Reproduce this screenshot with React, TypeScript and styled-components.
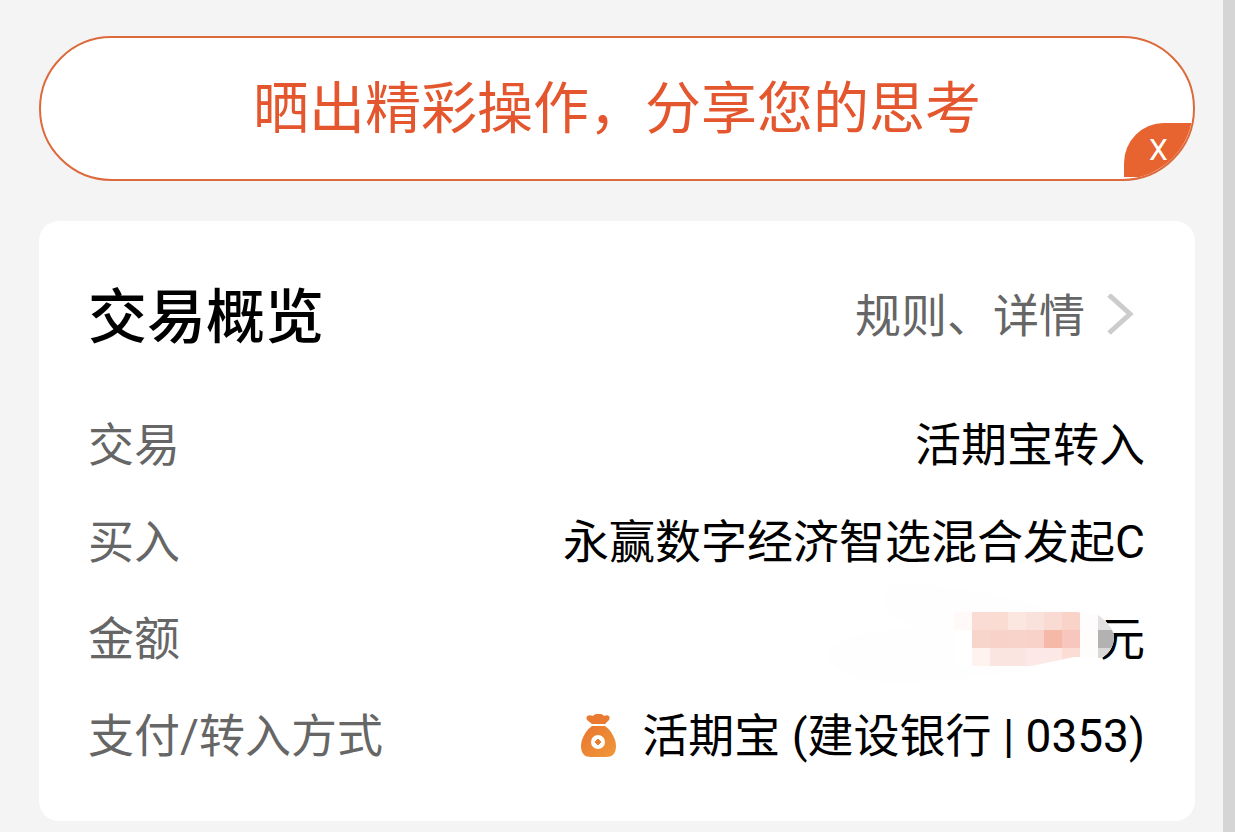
import React from 'react';
import styled, { createGlobalStyle } from 'styled-components';

const GlobalStyle = createGlobalStyle`
  * { box-sizing: border-box; }
  body {
    margin: 0;
    background: #f4f4f4;
    font-family: Roboto, "Noto Sans CJK SC", sans-serif;
  }
`;

const Page = styled.main`
  min-height: 100vh;
  padding: 36px 28px 11px 39px;
  border-right: 12px solid #d5d5d5;
  display: flex;
  flex-direction: column;
  gap: 40px;
`;

const Banner = styled.div`
  position: relative;
  overflow: hidden;
  display: flex;
  justify-content: center;
  align-items: center;
  height: 145px;
  border: 2px solid #dc6a3c;
  border-radius: 73px;
  background: #fff;
`;

const BannerLink = styled.a`
  color: #e4572e;
  font-size: 56px;
  line-height: 80px;
  text-decoration: none;
  white-space: nowrap;
`;

const CloseButton = styled.button`
  position: absolute;
  right: 0;
  bottom: 2px;
  width: 69px;
  height: 54px;
  padding: 0;
  border: 0;
  border-radius: 40px 0 0 0;
  background: #e76430;
  color: #fff;
  font: 400 30px/54px Roboto, sans-serif;
`;

const Card = styled.section`
  padding: 50px 50px 36px 49px;
  border-radius: 20px;
  background: #fff;
`;

const CardHeader = styled.header`
  display: flex;
  justify-content: space-between;
  align-items: center;
  height: 90px;
  margin-bottom: 36px;
`;

const Title = styled.h2`
  margin: 0;
  padding-top: 4px;
  font-size: 59px;
  line-height: 86px;
  font-weight: 500;
  color: #000;
`;

const DetailLink = styled.a`
  display: flex;
  align-items: center;
  gap: 20px;
  padding-right: 10px;
  color: #666;
  font-size: 46px;
  line-height: 66px;
  text-decoration: none;
`;

const Rows = styled.dl`
  margin: 0;
`;

const Row = styled.div`
  display: flex;
  justify-content: space-between;
  align-items: center;
  height: 97px;
  font-size: 46px;
  line-height: 67px;
  white-space: nowrap;
`;

const Label = styled.dt`
  color: #666;
`;

const Value = styled.dd`
  position: relative;
  display: flex;
  align-items: center;
  margin: 0;
  color: #000;
`;

const BagIcon = styled.svg`
  width: 38px;
  height: 46px;
  margin-right: 25px;
`;

const Mask = styled.svg`
  position: absolute;
  right: -15px;
  top: -29px;
  width: 340px;
  height: 118px;
`;

const mosaic = [
  ['#fffaf7', '#fadcd4', '#fbdcd3', '#fce7e0', '#f9e1dc', '#f9dbd4', '#f9d2c8', '#fefcfc', '#e1e1e1'],
  ['#ffffff', '#f8d5cb', '#f8d2c9', '#f8d3c9', '#f8d2c9', '#f6b8a7', '#f7c7bd', '#fffdfb', '#b2b2b2'],
  ['#ffffff', '#fef3ef', '#fbe5e0', '#fbe5e0', '#fce9e7', '#fce8e5', '#fbddd6', '#fdfdfc', '#d9d9d9'],
];

function AmountMask() {
  return (
    <Mask viewBox="820 577 340 118" aria-hidden="true">
      <defs>
        <clipPath id="stroke">
          <path d="M954 612H1076L1098 615C1107 621 1114 630 1114 637C1114 646 1109 653 1102 658L1080 657L1074 657L1031 666H954Z" />
        </clipPath>
      </defs>
      <path fill="#fefefe" d="M900 582C960 586 1010 598 1060 610L1098 615C1107 621 1114 630 1114 637C1114 646 1109 653 1102 658L1076 657C1010 675 940 684 880 682C835 677 825 660 830 648C845 632 880 632 915 626C875 616 874 586 900 582Z" />
      <g clipPath="url(#stroke)" shapeRendering="crispEdges">
        {mosaic.map((line, y) =>
          line.map((fill, x) => (
            <rect key={`${x}-${y}`} x={954 + x * 18} y={612 + y * 18} width="18" height="18" fill={fill} />
          )),
        )}
      </g>
    </Mask>
  );
}

function MoneyBag() {
  return (
    <BagIcon viewBox="0 1 38 46" aria-hidden="true">
      <defs>
        <linearGradient id="bag" x1="0" y1="0" x2="1" y2="1">
          <stop offset="0" stopColor="#e9752f" />
          <stop offset="1" stopColor="#f0983a" />
        </linearGradient>
      </defs>
      <path fill="#ea7a32" d="M13 11L8 7C6 3 10 1 14 3C16 0 23 0 25 3C29 1 32 3 30 7L26 11Z" />
      <path fill="url(#bag)" d="M13 13H26C32 17 37 26 37 33C37 41 33 44 27 44H12C6 44 2 41 2 33C2 26 7 17 13 13Z" />
      <circle cx="19" cy="29" r="7" fill="#fff" />
      <path fill="#ea7c30" d="M19 26L22 29L19 32L16 29Z" stroke="#ea7c30" strokeLinejoin="round" />
    </BagIcon>
  );
}

export default function App() {
  return (
    <>
      <GlobalStyle />
      <Page>
        <Banner>
          <BannerLink href="#share">晒出精彩操作，分享您的思考</BannerLink>
          <CloseButton type="button">X</CloseButton>
        </Banner>
        <Card>
          <CardHeader>
            <Title>交易概览</Title>
            <DetailLink href="#details">
              规则、详情
              <svg width="30" height="44" viewBox="0 0 30 44" fill="none" aria-hidden="true">
                <path d="M4 1L25 20L4 39" stroke="#ccc" strokeWidth="5" />
              </svg>
            </DetailLink>
          </CardHeader>
          <Rows>
            <Row>
              <Label>交易</Label>
              <Value>活期宝转入</Value>
            </Row>
            <Row>
              <Label>买入</Label>
              <Value>永赢数字经济智选混合发起C</Value>
            </Row>
            <Row>
              <Label>金额</Label>
              <Value>
                元
                <AmountMask />
              </Value>
            </Row>
            <Row>
              <Label>支付/转入方式</Label>
              <Value>
                <MoneyBag />
                活期宝 (建设银行 | 0353)
              </Value>
            </Row>
          </Rows>
        </Card>
      </Page>
    </>
  );
}
